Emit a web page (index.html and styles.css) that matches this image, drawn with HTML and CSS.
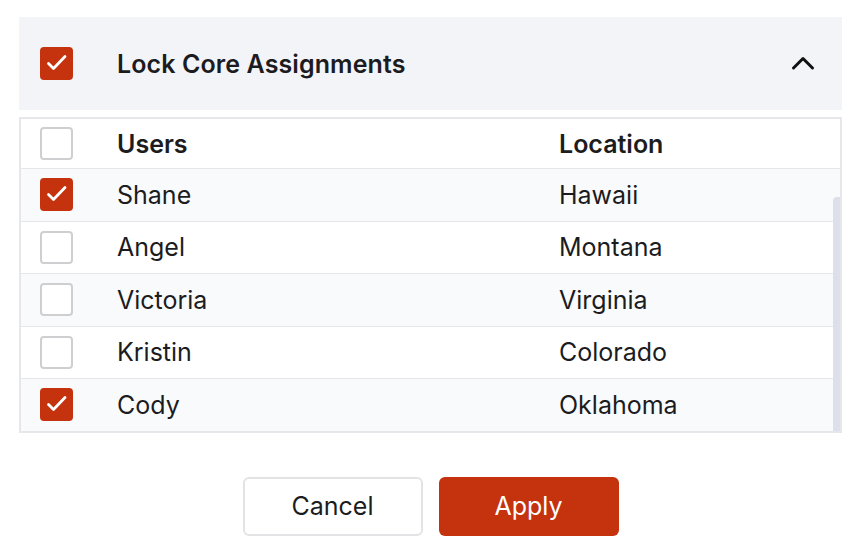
FILE: index.html
```html
<!DOCTYPE html>
<html lang="en">
<head>
    <meta charset="UTF-8" />
    <meta name="viewport" content="width=device-width, initial-scale=1.0" />
    <title>Lock Core Assignments</title>
    <link rel="stylesheet" href="styles.css">
</head>
<body>
  <div class="painel">
    <div class="cabecalho">
      <span class="caixa marcada">
        <svg viewBox="2 2 29 29"><path d="M8.5 16.5L13.5 21.5L25 9.5" /></svg>
      </span>
      <span class="titulo">Lock Core Assignments</span>
      <svg class="seta" viewBox="0 0 24 24"><path d="M2.5 16L12 6.5L21.5 16" /></svg>
    </div>

    <div class="tabela">
      <div class="linha topo">
        <span class="caixa"></span>
        <span class="col-usuario">Users</span>
        <span class="col-local">Location</span>
      </div>
      <div class="corpo">
        <div class="linha clara">
          <span class="caixa marcada"><svg viewBox="2 2 29 29"><path d="M8.5 16.5L13.5 21.5L25 9.5" /></svg></span>
          <span class="col-usuario">Shane</span>
          <span class="col-local">Hawaii</span>
        </div>
        <div class="linha">
          <span class="caixa"></span>
          <span class="col-usuario">Angel</span>
          <span class="col-local">Montana</span>
        </div>
        <div class="linha clara">
          <span class="caixa"></span>
          <span class="col-usuario">Victoria</span>
          <span class="col-local">Virginia</span>
        </div>
        <div class="linha">
          <span class="caixa"></span>
          <span class="col-usuario">Kristin</span>
          <span class="col-local">Colorado</span>
        </div>
        <div class="linha clara">
          <span class="caixa marcada"><svg viewBox="2 2 29 29"><path d="M8.5 16.5L13.5 21.5L25 9.5" /></svg></span>
          <span class="col-usuario">Cody</span>
          <span class="col-local">Oklahoma</span>
        </div>
        <div class="rolagem"></div>
      </div>
    </div>

    <div class="acoes">
      <button type="button" class="botao cancelar">Cancel</button>
      <button type="button" class="botao aplicar">Apply</button>
    </div>
  </div>
</body>
</html>
```

FILE: styles.css
```css
body {
    margin: 0;
    background: #fff;
    font-family: "Inter", "Noto Sans", sans-serif;
    color: #1c1c1e;
}

.painel {
    padding: 17px 23px 0 19px;
}

.cabecalho {
    display: flex;
    align-items: center;
    height: 93px;
    padding: 0 27px 0 21px;
    background: #f3f4f8;
}

.titulo {
    flex: 1;
    margin-left: 44px;
    font-size: 25px;
    font-weight: 600;
    letter-spacing: 0.1px;
}

.seta {
    width: 24px;
    height: 24px;
    fill: none;
    stroke: #111;
    stroke-width: 3;
    stroke-linecap: round;
    stroke-linejoin: round;
}

.caixa {
    box-sizing: border-box;
    width: 33px;
    height: 33px;
    flex: none;
    border: 2px solid #cfcfd2;
    border-radius: 4px;
    background: #fff;
    display: flex;
    align-items: center;
    justify-content: center;
}

.caixa.marcada {
    background: #c4320e;
    border-color: #c4320e;
}

.caixa svg {
    width: 29px;
    height: 29px;
    fill: none;
    stroke: #fff;
    stroke-width: 2.8;
    stroke-linecap: round;
    stroke-linejoin: round;
}

.tabela {
    margin-top: 7px;
    border: 2px solid #e6e7ea;
}

.corpo {
    position: relative;
}

.linha {
    display: flex;
    align-items: center;
    height: 51.5px;
    padding-left: 19px;
    border-top: 1px solid #e6e7ea;
    font-size: 25px;
    background: #fff;
}

.linha.topo {
    border-top: none;
    height: 49px;
    font-weight: 600;
}

.linha.clara {
    background: #f9fafc;
}

.col-usuario {
    width: 442px;
    margin-left: 44px;
}

.rolagem {
    position: absolute;
    right: 0;
    top: 29px;
    bottom: 0;
    width: 7px;
    background: #dde0eb;
    border-radius: 4px 0 0 0;
}

.acoes {
    display: flex;
    justify-content: center;
    gap: 16px;
    margin-top: 44px;
}

.botao {
    width: 180px;
    height: 59px;
    border-radius: 6px;
    font-family: inherit;
    font-size: 25px;
    cursor: pointer;
}

.cancelar {
    background: #fff;
    border: 2px solid #e3e3e6;
    color: #1c1c1e;
}

.aplicar {
    background: #c4320e;
    border: none;
    color: #fff;
}
```
